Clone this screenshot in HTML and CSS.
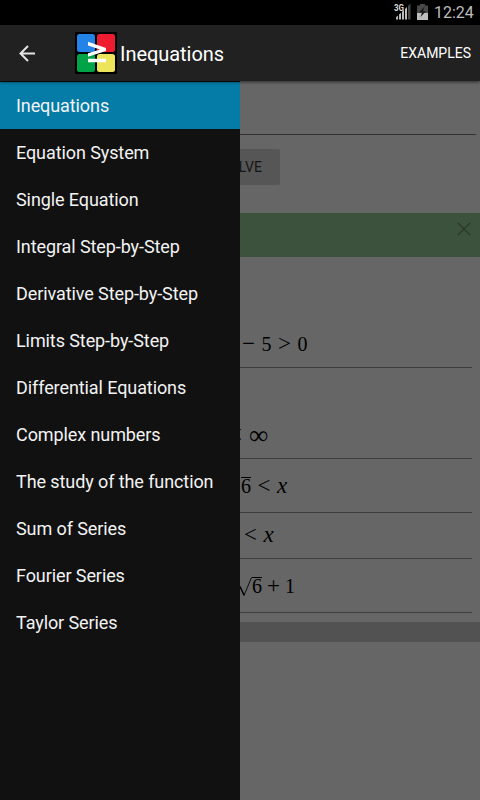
FILE: index.html
```html
<!DOCTYPE html>
<html lang="en">
<head>
<meta charset="utf-8">
<title>Inequations</title>
<link rel="stylesheet" href="styles.css">
</head>
<body>
<div class="status">
  <svg class="signal" width="18" height="19" viewBox="0 0 18 19"><path fill="#bdbdbd" d="M2 17.5V15.2L4 13.5V17.5ZM5 17.5V12.6L7 10.8V17.5ZM8 17.5V9.8L10 8V17.5ZM11 17.5V7L13 5V17.5Z"/><path fill="#484848" d="M14 17.5V4L16.500 1.500V17.500Z"/><text x="0" y="9" class="net" textLength="10" lengthAdjust="spacingAndGlyphs">3G</text></svg>
  <svg class="battery" width="11" height="16" viewBox="0 0 11 16"><path fill="#484848" d="M3 0H8V1.500H11V9H0V1.500H3Z"/><path fill="#bdbdbd" d="M0 9H11V16H0Z"/><path d="M7.500 2.500L2 8.500H5L3.500 13L9 7.200H6Z" fill="#181818"/></svg>
  <span class="clock">12:24</span>
</div>
<header class="bar">
  <svg class="back" width="16" height="17" viewBox="0 0 16 17"><path d="M9 1L1.500 8.500L9 16M1.500 8.500H16" fill="none" stroke="#e4e4e4" stroke-width="2"/></svg>
  <svg class="logo" width="42" height="42" viewBox="0 0 42 42"><path fill="#000" d="M0 0H42V42H0Z"/><rect x="2" y="2" width="18" height="18" rx="2.500" fill="#2483e6"/><rect x="22" y="2" width="18" height="18" rx="2.500" fill="#ed1c30"/><rect x="2" y="22" width="18" height="18" rx="2.500" fill="#00a447"/><rect x="22" y="22" width="18" height="18" rx="2.500" fill="#ece55b"/><path d="M13 9.800L31 16V19L13 24.700V21.200L25 17.500L13 13.600ZM13 26.800H31V30.200H13Z" fill="#fff"/></svg>
  <h1>Inequations</h1>
  <span class="examples">EXAMPLES</span>
</header>
<div class="stage">
  <main>
    <div class="field"></div>
    <button class="solve">SOLVE</button>
    <div class="notice"><svg width="14" height="14" viewBox="0 0 14 14"><path d="M.7 .7L13.300 13.300M13.300 .7L.7 13.300" stroke="#2c3b2c" stroke-width="1.500"/></svg></div>
    <div class="row r1"><span class="op w13">−</span><span class="n g6">5</span><span class="op w13 g6">&gt;</span><span class="n g6">0</span></div>
    <div class="row r2"><span class="op w13">&lt;</span><span class="inf">∞</span></div>
    <div class="row r3"><span class="n over">6</span><span class="op w13 g6">&lt;</span><span class="x g6">x</span></div>
    <div class="row r4"><span class="op w13">&lt;</span><span class="x g6">x</span></div>
    <div class="row r5"><svg class="root" width="15" height="20" viewBox="0 0 15 20"><path d="M1 11L3 9.500L7 18.500L14.500 .5" fill="none" stroke="#000" stroke-width=".9"/><path d="M3 9.500L7 18" stroke="#000" stroke-width="1.500"/></svg><span class="n over">6</span><span class="op w13 g5">+</span><span class="n g5">1</span></div>
    <div class="footer"></div>
  </main>
  <nav class="drawer">
    <a class="on">Inequations</a>
    <a>Equation System</a>
    <a>Single Equation</a>
    <a>Integral Step-by-Step</a>
    <a>Derivative Step-by-Step</a>
    <a>Limits Step-by-Step</a>
    <a>Differential Equations</a>
    <a>Complex numbers</a>
    <a>The study of the function</a>
    <a>Sum of Series</a>
    <a>Fourier Series</a>
    <a>Taylor Series</a>
  </nav>
</div>
</body>
</html>
```
FILE: styles.css
```css
* { box-sizing: border-box; }
body {
  margin: 0;
  width: 480px;
  height: 800px;
  overflow: hidden;
  display: flex;
  flex-direction: column;
  background: #666;
  font-family: Roboto, sans-serif;
}
.status {
  height: 25px;
  background: #000;
  display: flex;
  justify-content: flex-end;
  align-items: flex-start;
  padding-right: 6px;
}
.signal { margin: 2px 5px 0 0; }
.battery { margin: 4px 6px 0 0; }
.net { font: bold 9.5px Roboto, sans-serif; fill: #dcdcdc; }
.clock { font-size: 16px; line-height: 25px; color: #bebebe; width: 40px; white-space: nowrap; }
.bar {
  height: 56px;
  background: #212121;
  display: flex;
  align-items: center;
  padding: 0 9px 0 19px;
  color: #fff;
  position: relative;
  z-index: 2;
  box-shadow: 0 1px 3px rgba(0, 0, 0, .6);
}
.logo { margin-left: 40px; }
h1 { margin: 1px 0 0 3px; font-size: 20px; line-height: 24px; font-weight: 400; letter-spacing: -.04px; }
.examples { margin-left: auto; font-size: 14px; }
.stage { flex: 1; position: relative; }
.drawer {
  position: absolute;
  left: 0;
  top: 0;
  width: 240px;
  height: 100%;
  padding-top: 1px;
  background: #111;
}
.drawer a {
  display: block;
  height: 47px;
  line-height: 47px;
  padding-left: 16px;
  font-size: 18px;
  letter-spacing: -.09px;
  color: #f3f3f3;
  white-space: nowrap;
}
.drawer .on { background: #047ca7; }
main { display: flex; flex-direction: column; height: 100%; }
.field { height: 54px; margin: 0 4px; border-bottom: 1px solid #333; flex: none; }
.solve {
  width: 88px;
  height: 36px;
  margin: 14px 0 28px 192px;
  padding: 0 18px 0 0;
  border: 0;
  border-radius: 2px;
  background: #565656;
  color: #151515;
  font: 14px Roboto, sans-serif;
  text-align: right;
}
.notice {
  height: 44px;
  background: #3d523d;
  display: flex;
  justify-content: flex-end;
  padding: 9px 9px 0 0;
}
.row {
  margin: 0 8px;
  border-bottom: 1px solid #3d3d3d;
  display: flex;
  align-items: flex-end;
  font: 20px/24px "Liberation Serif", serif;
  color: #000;
}
.row span { height: 24px; display: block; white-space: nowrap; }
.n { width: 10px; }
.w13 { width: 13px; display: flex !important; justify-content: center; }
.op { font-size: 23px; }
.x { font-style: italic; font-size: 23px; width: 11px; }
.g6 { margin-left: 6.5px; }
.g5 { margin-left: 5px; }
.inf { font-size: 27px; width: 19px; margin-left: 7px; }
.r1 { height: 111px; padding: 0 0 11px 234px; }
.r2 { height: 91px; padding: 0 0 11px 221px; }
.r3 { height: 54px; padding: 0 0 14px 233px; }
.r4 { height: 46px; padding: 0 0 11px 236px; }
.r5 { height: 54px; padding: 0 0 14px 229px; }
.over { background: linear-gradient(#000, #000) 0 3px / 100% 1px no-repeat; }
.root { display: block; margin-bottom: 1px; }
.footer { height: 20px; margin-top: 9px; background: #525252; }
```
